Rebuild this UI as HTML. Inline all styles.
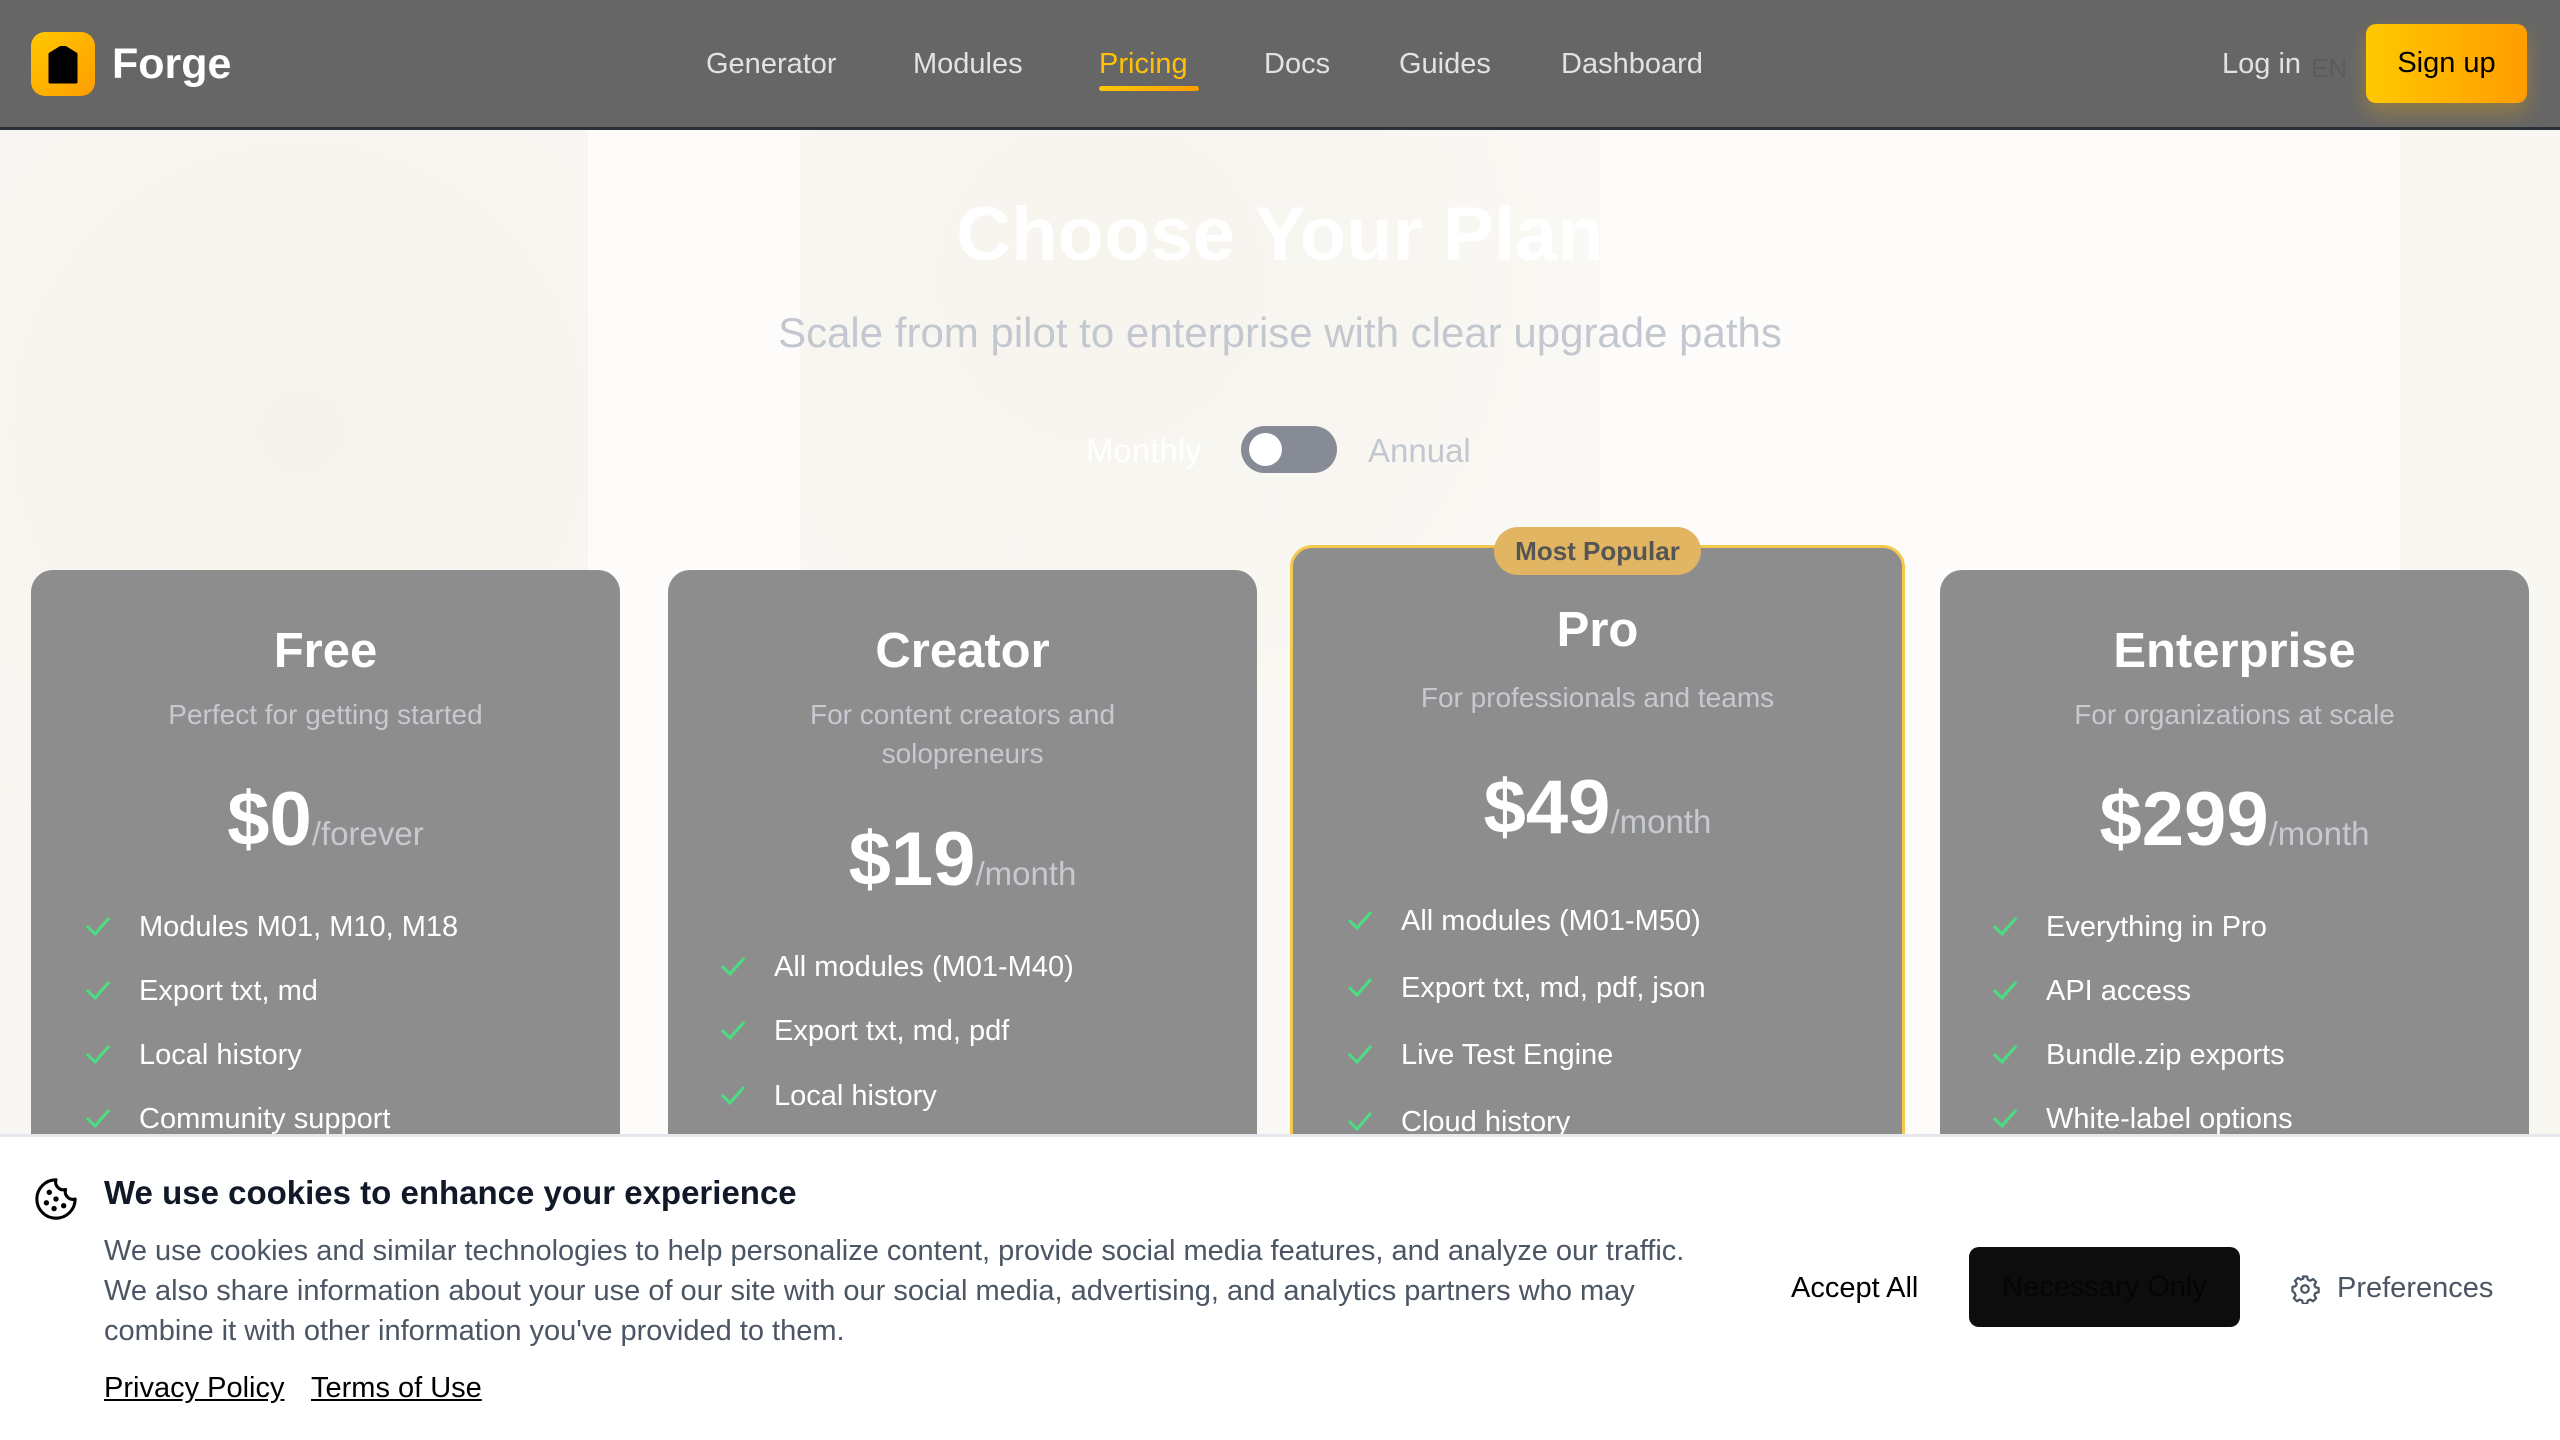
<!DOCTYPE html>
<html><head><meta charset="utf-8">
<style>
*{margin:0;padding:0;box-sizing:border-box}
body{width:2560px;height:1440px;overflow:hidden;position:relative;font-family:"Liberation Sans",sans-serif;background:#faf8f4}
.a{position:absolute;white-space:nowrap}
.nav{position:absolute;left:0;top:0;width:2560px;height:130px;background:#666666;border-bottom:3px solid #2a2f3a}
.nl{position:absolute;top:44px;font-size:29px;color:#e2e2e2;line-height:40px}
.card{position:absolute;top:570px;height:600px;background:#8e8d8e;border-radius:22px;width:589px}
.ct{position:absolute;left:0;right:0;text-align:center;color:#fff}
.title{font-size:49px;font-weight:bold;line-height:60px}
.sub{font-size:28px;color:#c6c9d0;line-height:40px}
.price{font-size:76px;font-weight:bold;line-height:90px}
.price span{font-size:33px;font-weight:normal;color:#c6c9d0}
.f{position:absolute;font-size:29px;color:#fff;line-height:40px;white-space:nowrap}
.f svg{position:absolute;left:-54px;top:8px}
.band{position:absolute;top:130px;height:1010px}
</style></head><body>
<div class="band" style="left:0;width:588px;background:radial-gradient(circle at 300px 300px,#f6f3ec,#f9f7f3 500px)"></div>
<div class="band" style="left:588px;width:212px;background:#fdfcfa"></div>
<div class="band" style="left:800px;width:800px;background:radial-gradient(circle at 300px 150px,#f7f4ee,#faf8f4 500px)"></div>
<div class="band" style="left:1600px;width:800px;background:#fdfcfa"></div>
<div class="band" style="left:2400px;width:160px;background:#f9f7f2"></div>
<div class="nav"></div>
<div class="a" style="left:31px;top:32px;width:64px;height:64px;border-radius:14px;background:linear-gradient(135deg,#ffc800,#ff9d00)"></div>
<svg class="a" style="left:46px;top:46px" width="34" height="38" viewBox="0 0 34 38"><path d="M17 0 L30 8 L30 36 L4 36 L4 8 Z" fill="#000" stroke="#000" stroke-linejoin="round" stroke-width="3"/></svg>
<div class="a" style="left:112px;top:38px;font-size:43px;font-weight:bold;color:#fff;line-height:52px">Forge</div>
<div class="nl" style="left:706px">Generator</div>
<div class="nl" style="left:913px">Modules</div>
<div class="nl" style="left:1099px;color:#ffc107">Pricing</div>
<div class="a" style="left:1099px;top:86px;width:100px;height:5px;border-radius:3px;background:linear-gradient(90deg,#ffc800,#ff9d00)"></div>
<div class="nl" style="left:1264px">Docs</div>
<div class="nl" style="left:1399px">Guides</div>
<div class="nl" style="left:1561px">Dashboard</div>
<div class="nl" style="left:2222px">Log in</div>
<div class="nl" style="left:2311px;color:#5c5c5c;top:48px;font-size:26px">EN</div>
<div class="a" style="left:2366px;top:24px;width:161px;height:79px;border-radius:10px;background:linear-gradient(90deg,#ffc800,#ff9d00);box-shadow:0 10px 20px rgba(255,180,0,.3);font-size:29px;color:#000;text-align:center;line-height:79px">Sign up</div>

<div class="a" style="left:0;width:2560px;text-align:center;top:190px;font-size:76px;font-weight:bold;color:#fff;line-height:90px">Choose Your Plan</div>
<div class="a" style="left:0;width:2560px;text-align:center;top:308px;font-size:42px;color:#c3c7cf;line-height:50px">Scale from pilot to enterprise with clear upgrade paths</div>
<div class="a" style="left:1086px;top:430px;font-size:33px;color:#fff;line-height:42px">Monthly</div>
<div class="a" style="left:1241px;top:426px;width:96px;height:47px;border-radius:24px;background:#868b95"></div>
<div class="a" style="left:1249px;top:433px;width:33px;height:33px;border-radius:50%;background:#fff"></div>
<div class="a" style="left:1368px;top:430px;font-size:33px;color:#c3c7cf;line-height:42px">Annual</div>

<div class="card" style="left:31px">
<div class="ct title" style="top:51px">Free</div>
<div class="ct sub" style="top:125px">Perfect for getting started</div>
<div class="ct price" style="top:205px">$0<span>/forever</span></div>
</div>
<div class="card" style="left:668px">
<div class="ct title" style="top:51px">Creator</div>
<div class="ct sub" style="top:125px">For content creators and</div>
<div class="ct sub" style="top:164px">solopreneurs</div>
<div class="ct price" style="top:245px">$19<span>/month</span></div>
</div>
<div class="card" style="left:1290px;top:545px;width:615px;height:625px;border:3px solid #f2c94c">
<div class="ct title" style="top:52px">Pro</div>
<div class="ct sub" style="top:130px">For professionals and teams</div>
<div class="ct price" style="top:215px">$49<span>/month</span></div>
</div>
<div class="a" style="left:1494px;top:527px;width:207px;height:48px;border-radius:24px;background:#e2b562;color:#555;font-size:26px;font-weight:bold;text-align:center;line-height:48px">Most Popular</div>
<div class="card" style="left:1940px">
<div class="ct title" style="top:51px">Enterprise</div>
<div class="ct sub" style="top:125px">For organizations at scale</div>
<div class="ct price" style="top:205px">$299<span>/month</span></div>
</div>

<div class="f" style="left:139px;top:907px"><svg width="26" height="22"><path d="M2 11 L10 19 L24 3" stroke="#4ade80" stroke-width="3" fill="none"/></svg>Modules M01, M10, M18</div>
<div class="f" style="left:139px;top:971px"><svg width="26" height="22"><path d="M2 11 L10 19 L24 3" stroke="#4ade80" stroke-width="3" fill="none"/></svg>Export txt, md</div>
<div class="f" style="left:139px;top:1035px"><svg width="26" height="22"><path d="M2 11 L10 19 L24 3" stroke="#4ade80" stroke-width="3" fill="none"/></svg>Local history</div>
<div class="f" style="left:139px;top:1099px"><svg width="26" height="22"><path d="M2 11 L10 19 L24 3" stroke="#4ade80" stroke-width="3" fill="none"/></svg>Community support</div>

<div class="f" style="left:774px;top:947px"><svg width="26" height="22"><path d="M2 11 L10 19 L24 3" stroke="#4ade80" stroke-width="3" fill="none"/></svg>All modules (M01-M40)</div>
<div class="f" style="left:774px;top:1011px"><svg width="26" height="22"><path d="M2 11 L10 19 L24 3" stroke="#4ade80" stroke-width="3" fill="none"/></svg>Export txt, md, pdf</div>
<div class="f" style="left:774px;top:1076px"><svg width="26" height="22"><path d="M2 11 L10 19 L24 3" stroke="#4ade80" stroke-width="3" fill="none"/></svg>Local history</div>

<div class="f" style="left:1401px;top:901px"><svg width="26" height="22"><path d="M2 11 L10 19 L24 3" stroke="#4ade80" stroke-width="3" fill="none"/></svg>All modules (M01-M50)</div>
<div class="f" style="left:1401px;top:968px"><svg width="26" height="22"><path d="M2 11 L10 19 L24 3" stroke="#4ade80" stroke-width="3" fill="none"/></svg>Export txt, md, pdf, json</div>
<div class="f" style="left:1401px;top:1035px"><svg width="26" height="22"><path d="M2 11 L10 19 L24 3" stroke="#4ade80" stroke-width="3" fill="none"/></svg>Live Test Engine</div>
<div class="f" style="left:1401px;top:1102px"><svg width="26" height="22"><path d="M2 11 L10 19 L24 3" stroke="#4ade80" stroke-width="3" fill="none"/></svg>Cloud history</div>

<div class="f" style="left:2046px;top:907px"><svg width="26" height="22"><path d="M2 11 L10 19 L24 3" stroke="#4ade80" stroke-width="3" fill="none"/></svg>Everything in Pro</div>
<div class="f" style="left:2046px;top:971px"><svg width="26" height="22"><path d="M2 11 L10 19 L24 3" stroke="#4ade80" stroke-width="3" fill="none"/></svg>API access</div>
<div class="f" style="left:2046px;top:1035px"><svg width="26" height="22"><path d="M2 11 L10 19 L24 3" stroke="#4ade80" stroke-width="3" fill="none"/></svg>Bundle.zip exports</div>
<div class="f" style="left:2046px;top:1099px"><svg width="26" height="22"><path d="M2 11 L10 19 L24 3" stroke="#4ade80" stroke-width="3" fill="none"/></svg>White-label options</div>

<div class="a" style="left:0;top:1134px;width:2560px;height:306px;background:#fff;border-top:3px solid #e6e7ec"></div>
<svg class="a" style="left:33px;top:1176px" width="46" height="46" viewBox="0 0 24 24" fill="none" stroke="#000" stroke-width="1.6" stroke-linecap="round" stroke-linejoin="round"><path d="M12 2a10 10 0 1 0 10 10 4 4 0 0 1-5-5 4 4 0 0 1-5-5"/><circle cx="8.5" cy="8.5" r=".6" fill="#000"/><circle cx="16" cy="15.5" r=".6" fill="#000"/><circle cx="12" cy="12" r=".6" fill="#000"/><circle cx="11" cy="17" r=".6" fill="#000"/><circle cx="7" cy="14" r=".6" fill="#000"/></svg>
<div class="a" style="left:104px;top:1172px;font-size:33px;font-weight:bold;color:#111827;line-height:42px">We use cookies to enhance your experience</div>
<div class="a" style="left:104px;top:1231px;font-size:29px;color:#4b5563;line-height:40px;white-space:normal;width:1680px">We use cookies and similar technologies to help personalize content, provide social media features, and analyze our traffic.<br>We also share information about your use of our site with our social media, advertising, and analytics partners who may<br>combine it with other information you've provided to them.</div>
<div class="a" style="left:104px;top:1368px;font-size:29px;color:#000;line-height:40px;text-decoration:underline">Privacy Policy</div>
<div class="a" style="left:311px;top:1368px;font-size:29px;color:#000;line-height:40px;text-decoration:underline">Terms of Use</div>
<div class="a" style="left:1791px;top:1268px;font-size:29px;color:#000;line-height:40px">Accept All</div>
<div class="a" style="left:1969px;top:1247px;width:271px;height:80px;border-radius:10px;background:#0d0d0d;color:#050505;font-size:29px;text-align:center;line-height:80px">Necessary Only</div>
<svg class="a" style="left:2290px;top:1274px" width="30" height="30" viewBox="0 0 24 24" fill="none" stroke="#4b5563" stroke-width="1.8" stroke-linejoin="round"><path d="M10.3 2h3.4l.6 2.6 1.9.8 2.3-1.4 2.4 2.4-1.4 2.3.8 1.9 2.6.6v3.4l-2.6.6-.8 1.9 1.4 2.3-2.4 2.4-2.3-1.4-1.9.8-.6 2.6h-3.4l-.6-2.6-1.9-.8-2.3 1.4-2.4-2.4 1.4-2.3-.8-1.9L2 13.7v-3.4l2.6-.6.8-1.9L4 5.5l2.4-2.4 2.3 1.4 1.9-.8z"/><circle cx="12" cy="12" r="3"/></svg>
<div class="a" style="left:2337px;top:1268px;font-size:29px;color:#4b5563;line-height:40px">Preferences</div>
</body></html>
